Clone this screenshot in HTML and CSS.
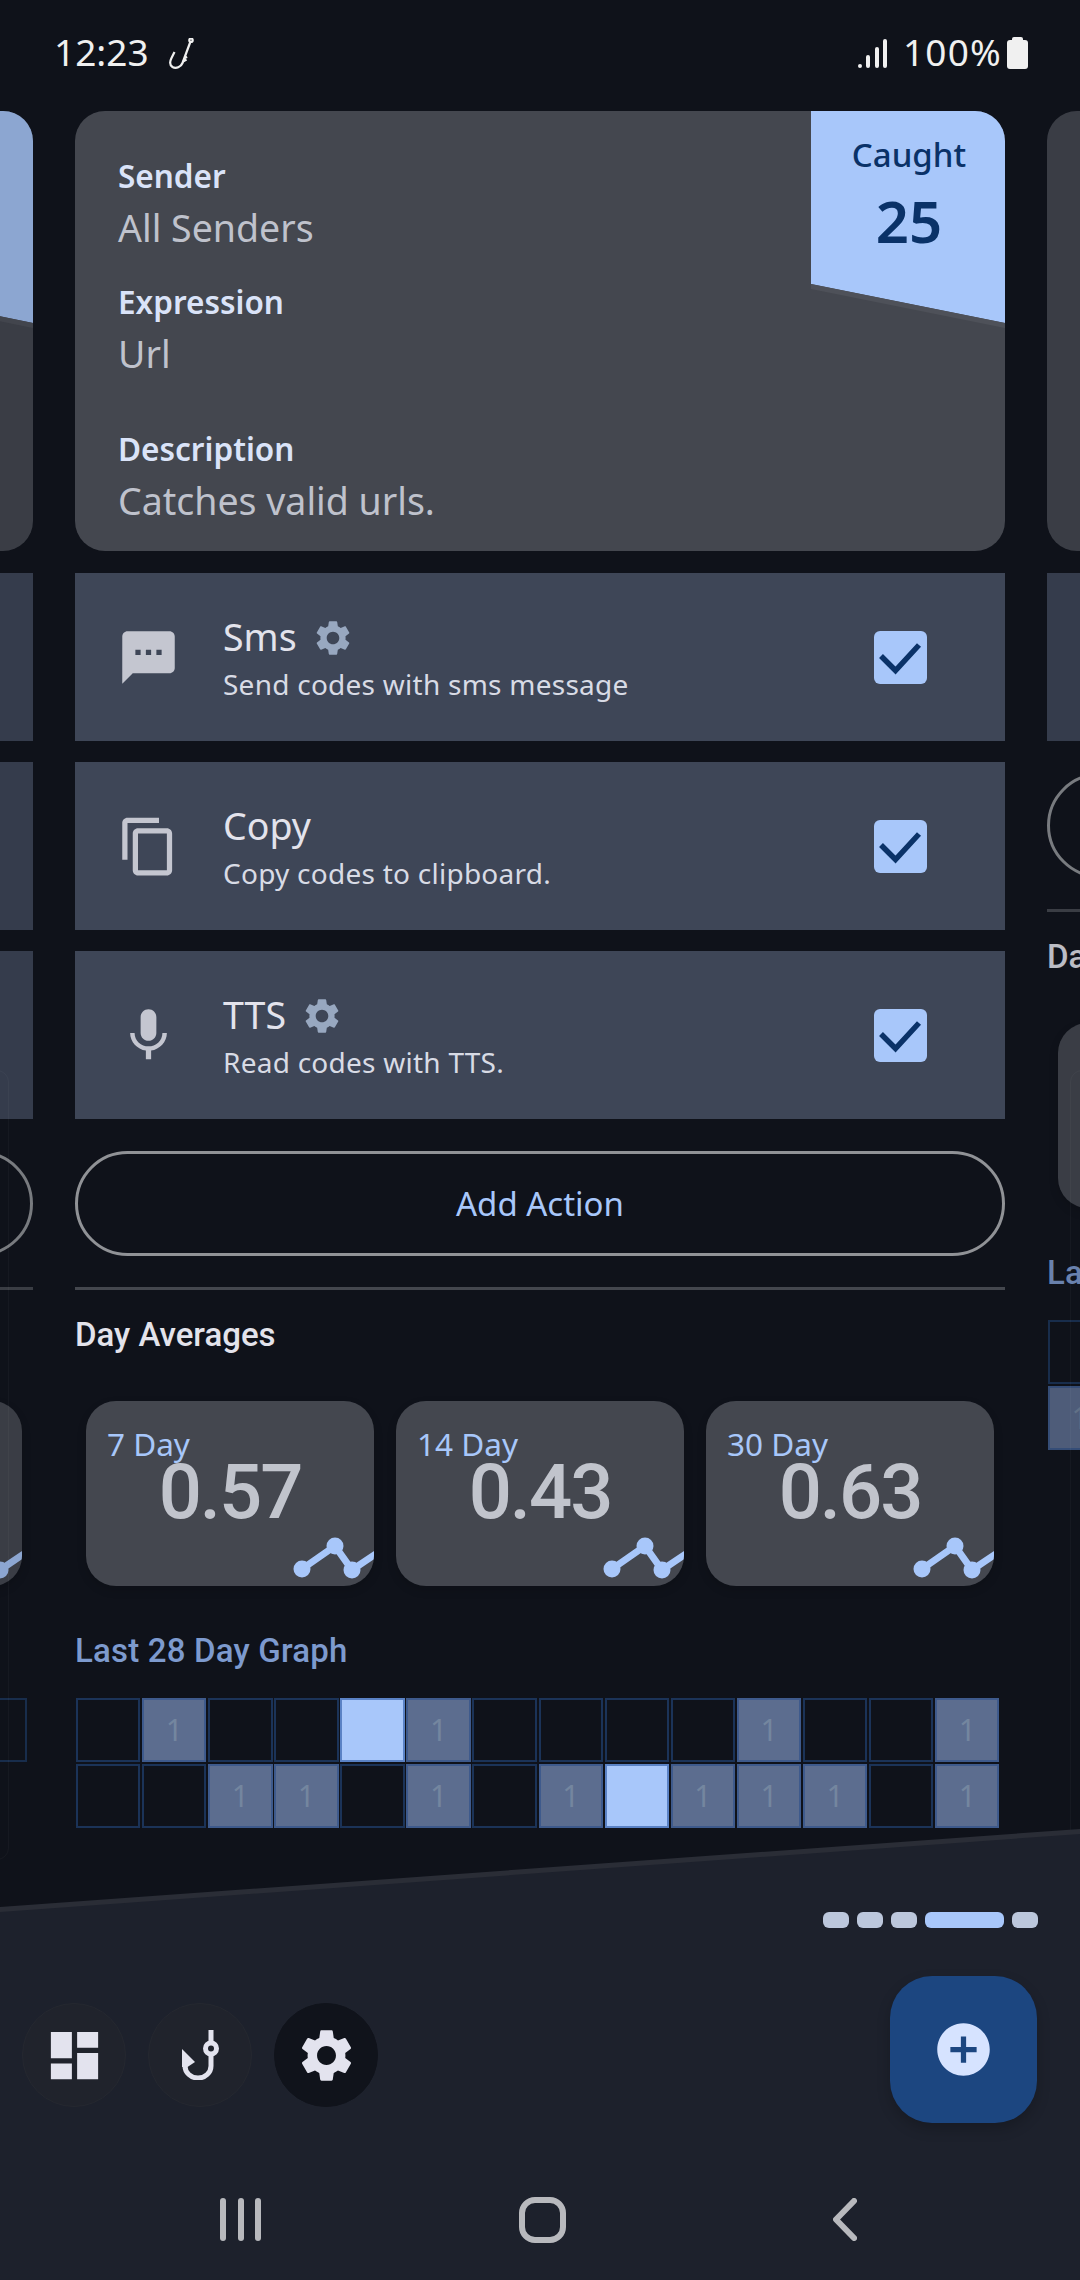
FILE: index.html
```html
<!DOCTYPE html>
<html lang="en">
<head>
    <meta charset="UTF-8">
    <meta name="viewport" content="width=device-width, initial-scale=1.0">
    <title>Caught</title>
    <link rel="stylesheet" href="styles.css">
</head>
<body>
    <svg class="defs" aria-hidden="true">
        <defs>
            <path id="cog" d="M19.14 12.94c.04-.3.06-.61.06-.94 0-.32-.02-.64-.07-.94l2.03-1.58c.18-.14.23-.41.12-.61l-1.92-3.32c-.12-.22-.37-.29-.59-.22l-2.39.96c-.5-.38-1.03-.7-1.62-.94l-.36-2.54c-.04-.24-.24-.41-.48-.41h-3.84c-.24 0-.43.17-.47.41l-.36 2.54c-.59.24-1.13.57-1.62.94l-2.39-.96c-.22-.08-.47 0-.59.22L2.74 8.87c-.12.21-.08.47.12.61l2.03 1.58c-.05.3-.09.63-.09.94s.02.64.07.94l-2.03 1.58c-.18.14-.23.41-.12.61l1.92 3.32c.12.22.37.29.59.22l2.39-.96c.5.38 1.03.7 1.62.94l.36 2.54c.05.24.24.41.48.41h3.84c.24 0 .44-.17.47-.41l.36-2.54c.59-.24 1.13-.56 1.62-.94l2.39.96c.22.08.47 0 .59-.22l1.92-3.32c.12-.22.07-.47-.12-.61l-2.01-1.58zM12 15.6c-1.98 0-3.6-1.62-3.6-3.6s1.62-3.6 3.6-3.6 3.6 1.62 3.6 3.6-1.62 3.6-3.6 3.6z"/>
            <g id="spark">
                <polyline points="0,47 33,24 50,48 90,21" fill="none" stroke="currentColor" stroke-width="7"/>
                <circle cx="0" cy="47" r="8.500"/>
                <circle cx="33" cy="24" r="8.500"/>
                <circle cx="50" cy="48" r="8.500"/>
            </g>
        </defs>
    </svg>

    <div class="app">
        <div class="status-bar">
            <span class="clock">12:23</span>
            <svg class="status-hook" viewBox="0 0 26 32">
                <path d="M21.5 3.5L13.5 25C12 29 7 31 3.5 29C.5 27 1 23 2.5 20L5.5 14"/>
                <circle cx="22" cy="2.2" r="1.7"/>
                <path d="M14 23.5l3.5-2M15.2 20l3-1"/>
            </svg>
            <div class="signal">
                <i class="bar-1"></i><i class="bar-2"></i><i class="bar-3"></i><i class="bar-4"></i>
            </div>
            <span class="battery-text">100%</span>
            <div class="battery"></div>
        </div>

        <div class="pager">
            <!-- previous page, only its right edge shows -->
            <section class="page page-side">
                <div class="card"><div class="caught"></div></div>
                <div class="actions">
                    <div class="action"></div>
                    <div class="action"></div>
                    <div class="action"></div>
                </div>
                <div class="add-action"></div>
                <div class="divider"></div>
                <div class="section-title">&nbsp;</div>
                <div class="stats">
                    <div class="stat"></div>
                    <div class="stat"></div>
                    <div class="stat">
                        <svg class="spark" viewBox="0 0 90 60"><use href="#spark"/></svg>
                    </div>
                </div>
                <div class="graph-title">&nbsp;</div>
                <div class="graph">
                    <div class="cell"></div><div class="cell"></div><div class="cell"></div><div class="cell"></div><div class="cell"></div><div class="cell"></div><div class="cell"></div>
                    <div class="cell"></div><div class="cell"></div><div class="cell"></div><div class="cell"></div><div class="cell"></div><div class="cell"></div><div class="cell"></div>
                </div>
            </section>

            <section class="page">
                <div class="card">
                    <div class="field">
                        <div class="field-label">Sender</div>
                        <div class="field-value">All Senders</div>
                    </div>
                    <div class="field">
                        <div class="field-label">Expression</div>
                        <div class="field-value">Url</div>
                    </div>
                    <div class="field field-spaced">
                        <div class="field-label">Description</div>
                        <div class="field-value">Catches valid urls.</div>
                    </div>
                    <div class="caught">
                        <div class="caught-label">Caught</div>
                        <div class="caught-count">25</div>
                    </div>
                </div>

                <div class="actions">
                    <div class="action">
                        <svg class="action-icon" viewBox="0 0 24 24"><path d="M20 2H4c-1.1 0-1.99.9-1.99 2L2 22l4-4h14c1.1 0 2-.9 2-2V4c0-1.1-.9-2-2-2zM9 11H7V9h2v2zm4 0h-2V9h2v2zm4 0h-2V9h2v2z"/></svg>
                        <div class="action-text">
                            <div class="action-title">Sms <svg class="cog" viewBox="0 0 24 24"><use href="#cog"/></svg></div>
                            <div class="action-sub">Send codes with sms message</div>
                        </div>
                        <div class="checkbox">
                            <svg viewBox="0 0 53 53"><polyline points="7,25 21.5,39.5 45,14"/></svg>
                        </div>
                    </div>
                    <div class="action">
                        <svg class="action-icon" viewBox="0 0 24 24"><path d="M16 1H4c-1.1 0-2 .9-2 2v14h2V3h12V1zm3 4H8c-1.1 0-2 .9-2 2v14c0 1.1.9 2 2 2h11c1.1 0 2-.9 2-2V7c0-1.1-.9-2-2-2zm0 16H8V7h11v14z"/></svg>
                        <div class="action-text">
                            <div class="action-title">Copy</div>
                            <div class="action-sub">Copy codes to clipboard.</div>
                        </div>
                        <div class="checkbox">
                            <svg viewBox="0 0 53 53"><polyline points="7,25 21.5,39.5 45,14"/></svg>
                        </div>
                    </div>
                    <div class="action">
                        <svg class="action-icon" viewBox="0 0 24 24"><path d="M12 14c1.66 0 2.99-1.34 2.99-3L15 5c0-1.66-1.34-3-3-3S9 3.34 9 5v6c0 1.66 1.34 3 3 3zm5.3-3c0 3-2.54 5.1-5.3 5.1S6.7 14 6.7 11H5c0 3.41 2.72 6.23 6 6.72V21h2v-3.28c3.28-.48 6-3.3 6-6.72h-1.7z"/></svg>
                        <div class="action-text">
                            <div class="action-title">TTS <svg class="cog" viewBox="0 0 24 24"><use href="#cog"/></svg></div>
                            <div class="action-sub">Read codes with TTS.</div>
                        </div>
                        <div class="checkbox">
                            <svg viewBox="0 0 53 53"><polyline points="7,25 21.5,39.5 45,14"/></svg>
                        </div>
                    </div>
                </div>

                <div class="add-action">Add Action</div>
                <div class="divider"></div>
                <div class="section-title">Day Averages</div>

                <div class="stats">
                    <div class="stat">
                        <div class="stat-label">7 Day</div>
                        <div class="stat-value">0.57</div>
                        <svg class="spark" viewBox="0 0 90 60"><use href="#spark"/></svg>
                    </div>
                    <div class="stat">
                        <div class="stat-label">14 Day</div>
                        <div class="stat-value">0.43</div>
                        <svg class="spark" viewBox="0 0 90 60"><use href="#spark"/></svg>
                    </div>
                    <div class="stat">
                        <div class="stat-label">30 Day</div>
                        <div class="stat-value">0.63</div>
                        <svg class="spark" viewBox="0 0 90 60"><use href="#spark"/></svg>
                    </div>
                </div>

                <div class="graph-title">Last 28 Day Graph</div>
                <div class="graph">
                    <div class="cell"></div>
                    <div class="cell cell-on">1</div>
                    <div class="cell"></div>
                    <div class="cell"></div>
                    <div class="cell cell-max"></div>
                    <div class="cell cell-on">1</div>
                    <div class="cell"></div>
                    <div class="cell"></div>
                    <div class="cell"></div>
                    <div class="cell"></div>
                    <div class="cell cell-on">1</div>
                    <div class="cell"></div>
                    <div class="cell"></div>
                    <div class="cell cell-on">1</div>

                    <div class="cell"></div>
                    <div class="cell"></div>
                    <div class="cell cell-on">1</div>
                    <div class="cell cell-on">1</div>
                    <div class="cell"></div>
                    <div class="cell cell-on">1</div>
                    <div class="cell"></div>
                    <div class="cell cell-on">1</div>
                    <div class="cell cell-max"></div>
                    <div class="cell cell-on">1</div>
                    <div class="cell cell-on">1</div>
                    <div class="cell cell-on">1</div>
                    <div class="cell"></div>
                    <div class="cell cell-on">1</div>
                </div>
            </section>

            <!-- next page, only its left edge shows -->
            <section class="page page-side page-next">
                <div class="card"></div>
                <div class="actions">
                    <div class="action"></div>
                </div>
                <div class="add-action"></div>
                <div class="divider"></div>
                <div class="section-title">Day Averages</div>
                <div class="stats">
                    <div class="stat"></div>
                </div>
                <div class="graph-title">Last 28 Day Graph</div>
                <div class="graph">
                    <div class="cell"></div>
                    <div class="cell cell-on">1</div>
                </div>
            </section>

            <div class="edge edge-left"></div>
            <div class="edge edge-right"></div>
        </div>

        <div class="bottom">
            <div class="wedge"></div>
            <div class="dots">
                <span class="dot"></span>
                <span class="dot"></span>
                <span class="dot"></span>
                <span class="dot dot-active"></span>
                <span class="dot"></span>
            </div>

            <div class="nav">
                <div class="nav-item">
                    <svg class="nav-icon" viewBox="0 0 24 24"><path d="M3 13h8V3H3v10zm0 8h8v-6H3v6zm10 0h8V11h-8v10zm0-18v6h8V3h-8z"/></svg>
                </div>
                <div class="nav-item">
                    <svg class="nav-hook" viewBox="0 0 37 50">
                        <path class="hook-line" d="M29 0V12M29 24V36A13 12 0 0 1 3 36V26"/>
                        <path d="M0 19L13 32L5.500 37H0z"/>
                        <circle class="hook-eye" cx="29" cy="18.500" r="5.500"/>
                    </svg>
                </div>
                <div class="nav-item nav-item-active">
                    <svg class="nav-icon" viewBox="0 0 24 24"><use href="#cog"/></svg>
                </div>
                <div class="fab">
                    <svg viewBox="0 0 24 24"><path d="M12 2C6.48 2 2 6.48 2 12s4.48 10 10 10 10-4.48 10-10S17.52 2 12 2zm5 11h-4v4h-2v-4H7v-2h4V7h2v4h4v2z"/></svg>
                </div>
            </div>

            <div class="system-nav">
                <div class="sys-btn">
                    <div class="recents"><i></i><i></i><i></i></div>
                </div>
                <div class="sys-btn">
                    <div class="home"></div>
                </div>
                <div class="sys-btn">
                    <svg class="back" viewBox="0 0 24 43"><polyline points="21,3 3,21.500 21,40"/></svg>
                </div>
            </div>
        </div>
    </div>
</body>
</html>
```

FILE: styles.css
```css
* {
    box-sizing: border-box;
}
body {
    margin: 0;
    background-color: #0f121a;
    font-family: "Noto Sans", sans-serif;
}
.defs {
    position: absolute;
    width: 0;
    height: 0;
}
.app {
    position: relative;
    width: 1080px;
    height: 2280px;
    overflow: hidden;
    display: flex;
    flex-direction: column;
    background-color: #0f121a;
}

/* status bar */
.status-bar {
    flex: none;
    height: 111px;
    display: flex;
    align-items: flex-start;
    padding: 0 52px 0 54px;
    color: #f0f0f0;
}
.clock {
    font-size: 37px;
    line-height: 50px;
    margin-top: 26.6px;
}
.status-hook {
    width: 26px;
    height: 32px;
    margin: 38px 0 0 20px;
    fill: none;
    stroke: #f0f0f0;
    stroke-width: 2.2;
}
.signal {
    margin: 39px 0 0 auto;
    height: 29px;
    display: flex;
    align-items: flex-end;
    gap: 4.3px;
}
.signal i {
    width: 4px;
    background-color: #f0f0f0;
    border-radius: 2px;
}
.bar-1 { height: 4.500px; }
.bar-2 { height: 13.500px; }
.bar-3 { height: 21px; }
.bar-4 { height: 29px; }
.battery-text {
    font-size: 37px;
    letter-spacing: 1.2px;
    line-height: 50px;
    margin: 26.6px 0 0 16px;
}
.battery {
    position: relative;
    width: 21px;
    height: 29.500px;
    margin: 39.5px 0 0 5px;
    background-color: #f0f0f0;
    border-radius: 3px;
}
.battery::before {
    content: "";
    position: absolute;
    top: -2.5px;
    left: 5px;
    width: 11px;
    height: 4px;
    background-color: #f0f0f0;
    border-radius: 2px 2px 0 0;
}

/* pager */
.pager {
    position: relative;
    flex: 1;
    min-height: 0;
    display: flex;
    gap: 42px;
    margin-left: -897px;
}
.page {
    flex: none;
    width: 930px;
}
.page-side {
    opacity: 0.82;
}
.edge {
    position: absolute;
    top: 959px;
    width: 40px;
    height: 790px;
    border: 1px solid rgba(255, 255, 255, 0.03);
    border-radius: 12px;
}
.edge-left {
    left: 866px;
}
.edge-right {
    left: 1967px;
}

/* top card */
.card {
    position: relative;
    height: 440px;
    padding: 43.4px 43px 0;
    background-color: #44474f;
    border-radius: 30px;
    overflow: hidden;
}
.field + .field {
    margin-top: 27px;
}
.field + .field-spaced {
    margin-top: 48.6px;
}
.field-label {
    font-size: 31.5px;
    font-weight: 600;
    line-height: 44px;
    color: #dae3f8;
}
.field-value {
    margin-top: 4.7px;
    font-size: 37.5px;
    line-height: 50px;
    color: #bfc2cc;
}
.caught {
    position: absolute;
    top: 0;
    right: 0;
    width: 194px;
    height: 220px;
    padding: 22px 0 0 2px;
    text-align: center;
    background-color: #a8c7fa;
    clip-path: polygon(0 0, 100% 0, 100% 212px, 0 173px);
}
.card::after {
    content: "";
    position: absolute;
    top: 0;
    right: 0;
    width: 194px;
    height: 220px;
    background-color: #4e5159;
    clip-path: polygon(0 173px, 100% 212px, 100% 217px, 0 178px);
}
.caught-label {
    font-size: 33px;
    font-weight: 500;
    line-height: 44px;
    color: #0a3268;
}
.caught-count {
    margin-top: 6.5px;
    font-size: 58px;
    font-weight: 600;
    line-height: 74px;
    color: #0a3268;
}

/* actions */
.actions {
    display: flex;
    flex-direction: column;
    gap: 21px;
    margin-top: 22px;
}
.action {
    height: 168px;
    display: flex;
    align-items: center;
    padding: 0 78px 0 42px;
    background-color: #3e4657;
}
.action-icon {
    flex: none;
    width: 63px;
    height: 63px;
    fill: #c4c6d0;
}
.action-text {
    flex: 1;
    margin-left: 43px;
    padding-top: 4px;
}
.action-title {
    display: flex;
    align-items: center;
    font-size: 37.5px;
    line-height: 46px;
    color: #e3e3ec;
}
.cog {
    width: 42px;
    height: 42px;
    margin-left: 15px;
    margin-top: 2px;
    fill: #98a8c0;
}
.action-sub {
    margin-top: 3.3px;
    font-size: 28px;
    letter-spacing: 0.25px;
    line-height: 40px;
    color: #d8dbe5;
}
.checkbox {
    flex: none;
    width: 53px;
    height: 53px;
    background-color: #a8c7fa;
    border-radius: 6px;
}
.checkbox svg {
    display: block;
    width: 53px;
    height: 53px;
    fill: none;
    stroke: #0a3268;
    stroke-width: 5.5;
}

/* add action */
.add-action {
    height: 105px;
    margin-top: 32px;
    display: flex;
    align-items: center;
    justify-content: center;
    font-size: 33px;
    color: #a8c7fa;
    border: 3px solid #909296;
    border-radius: 53px;
}
.divider {
    height: 3px;
    margin-top: 31px;
    background-color: #44474e;
}
.section-title {
    margin-top: 24.8px;
    font-family: Roboto, sans-serif;
    font-size: 33px;
    font-weight: 500;
    line-height: 40px;
    color: #e3e3eb;
}

/* day averages */
.stats {
    display: flex;
    gap: 22px;
    margin-top: 46.2px;
    padding: 0 11px;
}
.stat {
    position: relative;
    flex: none;
    width: 288px;
    height: 185px;
    padding: 23.5px 21px 0;
    background-color: #44474f;
    border-radius: 30px;
    overflow: hidden;
    box-shadow: 0 4px 10px rgba(0, 0, 0, 0.15);
}
.stat-label {
    position: relative;
    z-index: 1;
    font-size: 31.5px;
    line-height: 40px;
    color: #a8c7fa;
}
.stat-value {
    margin-top: -12.2px;
    font-family: Roboto, sans-serif;
    font-size: 76px;
    font-weight: 500;
    letter-spacing: -2px;
    line-height: 80px;
    text-align: center;
    color: #c1c4cc;
}
.spark {
    position: absolute;
    left: 216px;
    top: 121px;
    width: 90px;
    height: 60px;
    overflow: visible;
    color: #a8c7fa;
    fill: #a8c7fa;
}

/* 28 day graph */
.graph-title {
    margin-top: 44.8px;
    font-family: Roboto, sans-serif;
    font-size: 33px;
    font-weight: 500;
    letter-spacing: 0.2px;
    line-height: 40px;
    color: #7d9ace;
}
.graph {
    display: grid;
    grid-template-columns: repeat(14, 64.4px);
    grid-auto-rows: 64px;
    gap: 2px 1.7px;
    margin: 27.2px 0 0 1px;
}
.cell {
    display: flex;
    align-items: center;
    justify-content: center;
    font-size: 30px;
    line-height: 1;
    color: #74869f;
    background-color: #0f121a;
    border: 2px solid #1b3358;
}
.cell-on {
    background-color: #5c6d8f;
    border-color: #3e5a8c;
}
.cell-max {
    background-color: #a8c7fa;
    border-color: #5a82c5;
}
.page-next .graph {
    grid-template-rows: 64px 64px;
    grid-auto-flow: column;
}

/* bottom panel */
.bottom {
    position: relative;
    flex: none;
    height: 369px;
    background-color: #1d212c;
    border-top: 1px solid #15181f;
}
.wedge {
    position: absolute;
    left: 0;
    right: 0;
    bottom: 100%;
    height: 83px;
    background-color: #2a2d36;
    clip-path: polygon(0 78px, 100% 0, 100% 100%, 0 100%);
}
.wedge::after {
    content: "";
    position: absolute;
    inset: 0;
    background-color: #1d212c;
    clip-path: polygon(0 83px, 100% 5px, 100% 100%, 0 100%);
}
.dots {
    display: flex;
    justify-content: flex-end;
    gap: 8px;
    padding-right: 42px;
}
.dot {
    width: 26px;
    height: 16px;
    background-color: #bcc7dc;
    border-radius: 6px;
}
.dot-active {
    width: 79px;
    background-color: #a8c7fa;
}
.nav {
    display: flex;
    align-items: flex-start;
    gap: 22px;
    margin-top: 48px;
    padding: 0 43px 0 22px;
}
.nav-item {
    flex: none;
    width: 104px;
    height: 104px;
    margin-top: 27px;
    display: flex;
    align-items: center;
    justify-content: center;
    background-color: #20232c;
    border: 1px solid #252830;
    border-radius: 50%;
}
.nav-item-active {
    background-color: #10131b;
    border-color: #10131b;
}
.nav-icon {
    width: 63px;
    height: 63px;
    fill: #e3e3ee;
}
.nav-hook {
    width: 37px;
    height: 50px;
    fill: #e3e3ee;
}
.hook-line {
    fill: none;
    stroke: #e3e3ee;
    stroke-width: 5;
}
.hook-eye {
    stroke: #e3e3ee;
    stroke-width: 5;
    fill: #20232c;
}
.fab {
    flex: none;
    width: 147px;
    height: 147px;
    margin-left: auto;
    display: flex;
    align-items: center;
    justify-content: center;
    background-color: #1c4680;
    border-radius: 42px;
    box-shadow: 0 6px 14px rgba(0, 0, 0, 0.2);
}
.fab svg {
    width: 63px;
    height: 63px;
    fill: #d6e3ff;
}
.system-nav {
    display: flex;
    margin-top: 73.6px;
    padding-left: 89.5px;
}
.sys-btn {
    flex: none;
    width: 302px;
    height: 46px;
    display: flex;
    align-items: center;
    justify-content: center;
}
.recents {
    display: flex;
    gap: 11.6px;
}
.recents i {
    width: 6px;
    height: 43px;
    background-color: #b8b9bd;
    border-radius: 3px;
}
.home {
    width: 47px;
    height: 46px;
    border: 6px solid #b8b9bd;
    border-radius: 16px;
}
.back {
    width: 24px;
    height: 43px;
    fill: none;
    stroke: #b8b9bd;
    stroke-width: 6;
    stroke-linecap: round;
    stroke-linejoin: round;
}
```
